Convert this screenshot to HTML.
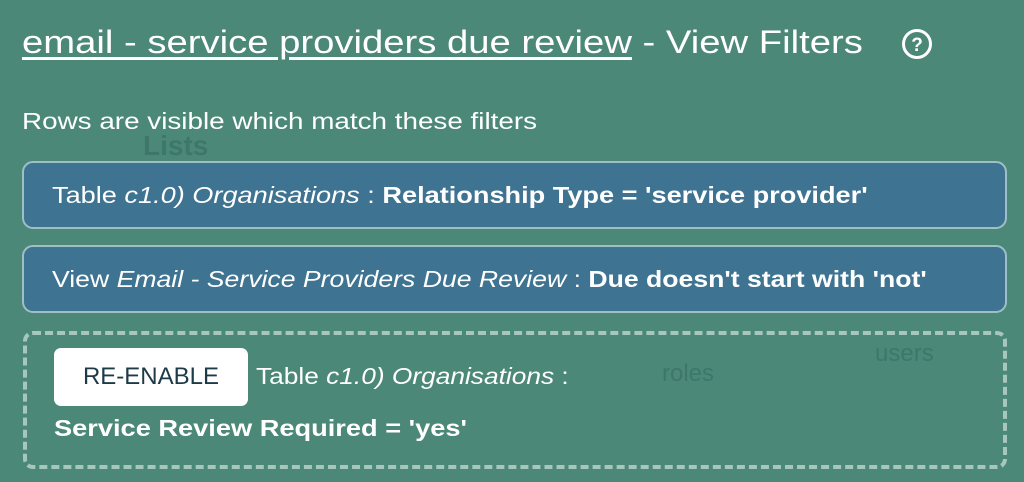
<!DOCTYPE html>
<html><head><style>
body{margin:0;width:1024px;height:482px;overflow:hidden;background:#4b8878;font-family:"Liberation Sans",sans-serif;color:#fff;position:relative}
.a{position:absolute;white-space:nowrap}
.s{display:inline-block;transform-origin:0 50%}
.box{position:absolute;left:22px;width:981px;height:64px;background:#3e7391;border:2px solid #9fbfc6;border-radius:11px;font-size:23px;line-height:64px;box-sizing:content-box}
.box span.t{position:absolute;left:28px;transform-origin:0 50%}
b{font-weight:bold}
.ghost{position:absolute;color:rgba(40,90,80,0.35);font-size:26px}
</style></head><body>
<div class="ghost" style="left:143px;top:130px;font-weight:bold;font-size:28px">Lists</div>
<div class="ghost" style="left:662px;top:360px;font-size:24px">roles</div>
<div class="ghost" style="left:875px;top:340px;font-size:24px">users</div>
<div class="a" style="left:22px;top:22px;font-size:32px;line-height:40px"><span class="s" style="transform:scaleX(1.195)"><span style="text-decoration:underline;text-underline-offset:4px">email - service providers due review</span> - View Filters</span></div>
<svg class="a" style="left:901px;top:28px" width="32" height="32" viewBox="0 0 32 32"><circle cx="16" cy="16" r="13.5" fill="none" stroke="#fff" stroke-width="3"/><text x="16" y="23" text-anchor="middle" font-family="Liberation Sans" font-weight="bold" font-size="19" fill="#fff">?</text></svg>
<div class="a" style="left:22px;top:107px;font-size:23px;line-height:28px"><span class="s" style="transform:scaleX(1.21)">Rows are visible which match these filters</span></div>
<div class="box" style="top:161px"><span class="t" style="transform:scaleX(1.18)">Table <i>c1.0) Organisations</i> : <b>Relationship Type = 'service provider'</b></span></div>
<div class="box" style="top:245px"><span class="t" style="transform:scaleX(1.157)">View <i>Email - Service Providers Due Review</i> : <b>Due doesn't start with 'not'</b></span></div>
<div class="a" style="left:23px;top:331px;width:976px;height:130px;border:4px dashed #a7c6bc;border-radius:10px"></div>
<div class="a" style="left:54px;top:348px;width:194px;height:58px;background:#fff;border-radius:7px;color:#1d3a48;font-size:24px;line-height:58px;text-align:center">RE-ENABLE</div>
<div class="a" style="left:256px;top:362px;font-size:23px;line-height:28px"><span class="s" style="transform:scaleX(1.143)">Table <i>c1.0) Organisations</i> :</span></div>
<div class="a" style="left:54px;top:414px;font-size:23px;line-height:28px;font-weight:bold"><span class="s" style="transform:scaleX(1.183)">Service Review Required = 'yes'</span></div>
</body></html>
